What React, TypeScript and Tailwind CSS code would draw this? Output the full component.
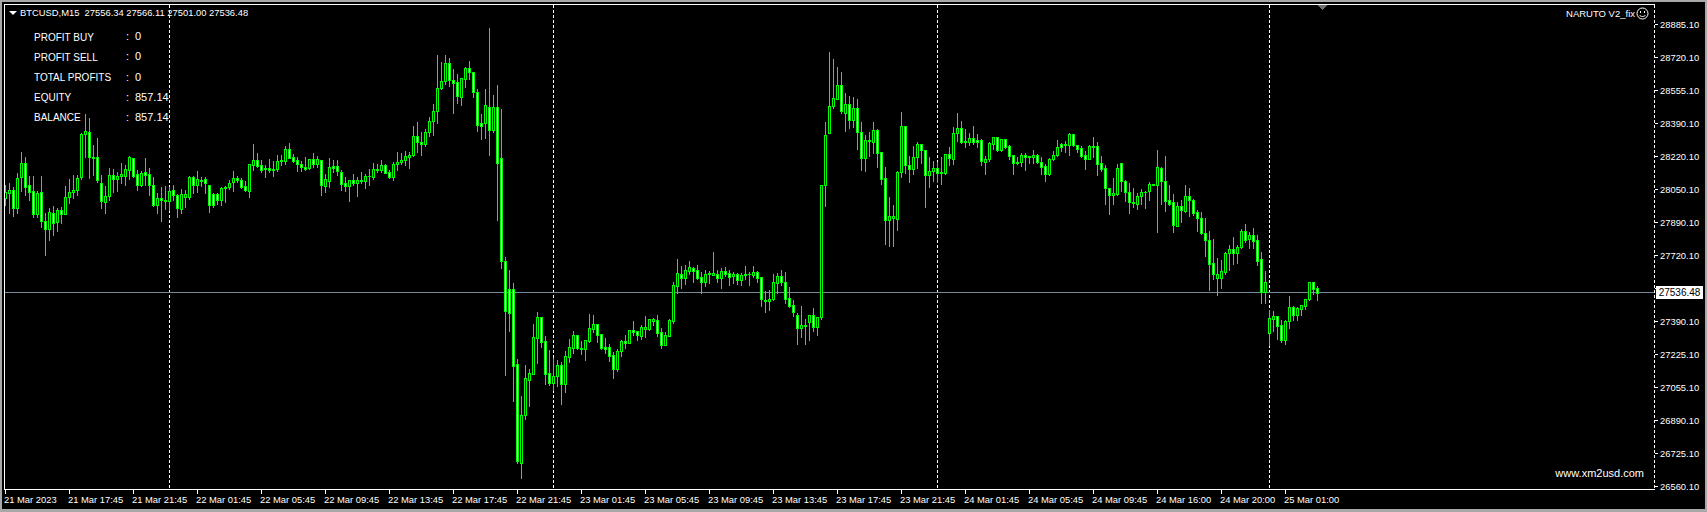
import React from 'react';

type Row = number[];

// candle readings: [high, bodyTop, bodyBottom, low, filled], traced from 3x crops so y = off + v / 3
const groups: { off: number; rows: Row[] }[] = [
  { off: 100, rows: [
    [255,277,293,315,0],[250,271,278,340,0],[262,271,325,347,1],[218,235,325,340,0],[157,190,232,272,0],[170,190,262,285,1],
    [227,256,277,300,1],[227,274,343,350,1],[272,279,341,352,0],[229,277,363,380,1],[340,364,388,464,1],[325,337,388,420,0],
    [318,340,370,405,1],[325,331,367,392,0],[320,331,341,370,1],[258,292,341,341,0],[238,277,292,310,0],[226,271,277,295,0],
    [225,235,271,285,0],[100,103,232,238,0],[42,94,103,170,0],[55,97,172,235,1],[135,172,173,225,0],[113,172,241,245,1],
    [225,250,304,323,1],[258,289,307,340,0],[205,226,289,300,0],[206,226,238,275,1],[215,229,238,272,0],[190,223,229,250,0],
    [195,208,229,255,0],[168,171,211,237,0],[175,175,229,232,1],[210,223,254,270,1],[212,220,256,258,0],[175,217,226,255,1],
    [205,223,256,285,1],[230,256,314,318,1],[280,295,314,340,0],[262,295,301,362,1],[257,301,302,328,0],[262,274,304,330,0],
    [255,271,286,300,1],[283,286,325,350,1],[268,283,326,338,0],[270,283,292,320,0],[228,232,292,296,0],[228,232,254,280,1],
    [213,238,254,275,0],[230,241,242,258,0],[232,238,250,280,1],[255,256,316,335,1],[278,283,316,320,1],[280,283,301,312,1],
    [262,265,301,315,0],[258,262,265,305,1],[240,250,262,268,0],[213,235,247,272,0],[228,235,241,245,1],
  ] },
  { off: 40, rows: [
    [415,421,440,445,1],[423,439,451,453,1],[372,373,452,470,0],[312,361,376,390,0],[340,361,377,380,1],[360,376,389,395,1],
    [375,385,388,410,1],[358,385,389,395,1],[362,388,389,408,0],[346,364,386,392,0],[345,361,364,375,0],[319,328,362,372,0],
    [309,328,353,353,1],[343,352,362,366,1],[352,361,371,392,1],[362,371,382,392,1],[351,382,386,389,1],[358,358,383,386,0],
    [339,358,371,380,1],[349,358,371,380,0],[360,361,434,465,1],[403,418,437,456,0],[354,382,422,440,0],[360,379,385,395,1],
    [360,379,394,405,1],[390,397,431,450,1],[411,430,437,453,1],[420,421,437,483,0],[402,421,428,434,1],[411,421,428,468,0],
    [396,421,422,428,0],[402,408,422,444,0],[387,408,409,435,0],[369,388,410,416,0],[373,388,389,396,0],[360,376,389,395,0],
    [371,376,398,400,1],[390,397,410,415,1],[366,373,410,420,0],[336,367,373,390,0],[339,361,367,372,0],[333,349,361,375,0],
    [335,346,350,384,0],[258,289,346,348,0],[246,289,307,335,1],[276,307,311,345,1],[266,277,311,318,0],[232,244,277,288,0],
    [193,214,244,285,0],[45,145,214,248,0],[66,124,145,147,0],[45,70,124,132,0],[54,70,121,138,1],[87,121,128,218,1],
    [102,127,167,190,1],[114,115,170,194,0],[82,85,118,140,0],[63,85,97,118,1],[97,97,157,170,1],
  ] },
  { off: 20, rows: [
    [207,217,314,332,1],[282,310,317,356,1],[207,256,310,354,0],[24,260,329,405,1],[225,262,329,335,0],[195,262,428,600,1],[267,415,723,745,1],
  ] },
  { off: 280, rows: [
    [-70,-57,92,285,1],[-30,27,98,152,1],[10,28,257,362,1],[237,253,542,548,1],[348,406,548,593,0],[255,295,404,417,0],
    [267,280,299,378,0],[133,172,281,281,0],[96,112,173,249,0],[112,112,185,200,1],[168,184,281,312,1],[210,278,308,315,1],
    [235,287,308,330,0],[240,256,287,318,0],[247,256,311,372,1],[213,229,311,336,0],[178,202,232,246,0],[153,166,204,218,0],
    [166,166,205,208,1],[183,205,208,222,1],[180,181,208,240,0],[102,145,183,185,0],[105,133,146,156,0],[133,133,166,187,1],
    [163,163,205,206,1],[175,202,206,218,1],[193,202,227,243,1],[217,226,266,294,1],[208,214,266,273,0],[180,184,214,228,0],
    [165,184,190,204,1],[150,151,190,190,0],[123,151,155,165,1],[153,154,166,180,1],
  ] },
  { off: 240, rows: [
    [255,262,288,297,0],[228,262,266,290,0],[238,238,267,270,0],[235,238,242,255,0],[225,240,278,288,1],[265,277,315,323,1],
    [277,286,315,315,0],[238,241,287,288,0],[127,136,243,250,0],[57,100,137,158,0],[78,103,113,143,1],[75,91,114,132,0],
    [64,82,92,103,0],[80,84,92,125,1],[75,91,114,117,1],[97,112,125,158,1],[90,103,125,137,0],[93,100,103,130,0],
    [37,100,104,105,0],[91,103,113,125,1],[85,94,113,143,0],[82,94,101,107,1],[90,100,110,135,1],[97,103,109,128,0],
    [98,103,119,132,1],[100,106,119,135,0],[79,103,106,118,0],[95,103,103,134,0],[79,97,105,110,0],[93,97,113,125,1],
    [112,112,176,198,1],[153,181,182,216,0],[150,178,182,210,0],[102,127,178,180,0],[100,109,128,158,0],[91,109,125,135,1],
    [97,127,176,190,1],[141,175,197,200,1],[180,196,215,228,1],[220,226,263,312,1],[198,256,263,290,0],[237,256,257,312,0],
    [225,226,245,300,0],[205,226,262,273,1],[232,232,262,285,0],
  ] },
  { off: 40, rows: [
    [436,436,831,837,0],[247,286,434,497,0],[37,199,278,278,0],[57,175,199,203,0],[81,136,177,177,0],[97,136,212,219,1],
    [160,193,218,273,0],[168,193,239,264,1],[171,205,239,262,0],[178,205,277,327,1],[247,277,353,390,1],[286,301,353,393,0],
    [277,301,304,348,0],[247,271,305,338,0],[268,271,338,381,1],[337,337,416,432,1],[381,415,539,612,1],[472,529,539,618,0],
    [496,529,535,618,0],[394,397,536,570,0],[217,259,397,411,0],[259,259,376,400,1],[348,376,388,426,1],[319,352,388,402,0],
    [307,313,352,385,0],[313,313,331,370,1],[331,331,406,500,1],[351,394,406,441,0],[363,385,394,423,0],[365,385,400,426,1],
    [351,397,400,432,0],[343,343,398,402,0],[322,343,355,375,1],[262,280,356,372,0],[220,265,280,303,0],[243,265,307,308,1],
    [267,304,307,320,1],[280,295,307,315,0],[259,295,307,312,1],[282,301,307,322,1],[298,301,364,375,1],[349,358,365,402,0],
    [307,310,358,363,0],[292,292,311,327,0],[292,292,331,332,1],[298,298,331,332,0],[298,298,320,325,1],[316,319,349,356,1],
    [346,346,370,402,1],[351,367,370,372,0],[340,346,367,378,0],[340,346,352,390,1],[349,349,352,369,0],[331,346,350,369,0],
    [343,346,367,370,1],[352,367,380,403,1],[373,379,403,423,1],[355,358,403,405,0],[334,346,358,361,0],[300,322,346,348,0],
  ] },
  { off: 110, rows: [
    [100,103,112,122,1],[93,103,104,125,0],[70,73,106,135,0],[72,73,106,107,1],[106,106,116,125,1],[108,115,137,140,1],
    [123,136,146,177,1],[106,109,146,147,0],[82,109,110,140,0],[97,109,161,195,1],[139,160,176,183,1],[165,175,235,282,1],
    [234,235,254,312,1],[205,250,254,282,0],[163,175,253,254,0],[160,160,214,243,1],[211,214,247,273,1],[220,247,277,309,1],
    [235,277,280,290,0],[250,259,282,297,0],[238,247,259,283,0],[244,245,247,294,0],[217,223,244,270,0],[223,223,224,224,0],
    [121,172,224,365,0],[172,175,214,282,1],[139,214,272,303,1],[226,271,281,285,1],[253,277,346,366,1],[275,289,347,348,0],
    [271,289,301,336,1],[226,259,304,305,0],[234,259,271,319,1],[268,270,308,315,1],[300,307,325,362,1],[306,325,370,372,1],
    [324,370,391,438,1],[363,391,461,540,1],[388,460,491,506,1],[445,492,503,555,0],[450,484,503,535,0],[425,430,485,493,0],
    [404,418,428,480,0],[381,418,428,462,1],[405,412,428,458,0],[358,364,412,414,0],[343,364,389,395,1],[365,376,388,414,0],
    [354,376,392,414,1],[376,391,452,465,1],
  ] },
  { off: 250, rows: [
    [5,28,125,158,1],[63,97,125,160,0],[180,205,248,285,0],[183,199,208,243,0],[199,199,227,268,1],[210,226,270,275,1],
    [210,214,269,282,0],[139,172,214,234,0],[168,172,195,210,1],[172,175,195,210,0],[166,166,176,196,0],[148,148,167,178,0],
    [97,97,148,150,0],[97,97,116,132,1],[108,115,128,150,1],
  ] },
];

const candles = groups.flatMap((g) =>
  g.rows.map(([h, t, b, l, filled]) => ({
    h: Math.round(g.off + h / 3),
    t: Math.round(g.off + t / 3),
    b: Math.round(g.off + b / 3),
    l: Math.round(g.off + l / 3),
    filled: filled === 1,
  }))
);

const times = [
  '21 Mar 2023', '21 Mar 17:45', '21 Mar 21:45', '22 Mar 01:45', '22 Mar 05:45', '22 Mar 09:45', '22 Mar 13:45',
  '22 Mar 17:45', '22 Mar 21:45', '23 Mar 01:45', '23 Mar 05:45', '23 Mar 09:45', '23 Mar 13:45', '23 Mar 17:45',
  '23 Mar 21:45', '24 Mar 01:45', '24 Mar 05:45', '24 Mar 09:45', '24 Mar 16:00', '24 Mar 20:00', '25 Mar 01:00',
];

const prices = [
  '28885.10', '28720.10', '28555.10', '28390.10', '28220.10', '28050.10', '27890.10', '27720.10',
  '27555.10', '27390.10', '27225.10', '27055.10', '26890.10', '26725.10', '26560.10',
];

const stats = [
  { label: 'PROFIT BUY', value: '0', h: 'h-[19px]' },
  { label: 'PROFIT SELL', value: '0', h: 'h-[21px]' },
  { label: 'TOTAL PROFITS', value: '0', h: 'h-[20px]' },
  { label: 'EQUITY', value: '857.14', h: 'h-[20px]' },
  { label: 'BALANCE', value: '857.14', h: 'h-[20px]' },
];

const Chart = () => (
  <svg width={1650} height={484} viewBox="5 5 1650 484" shapeRendering="crispEdges" className="block">
    {[169, 553, 937, 1269].map((x) => (
      <line key={x} x1={x + 0.5} x2={x + 0.5} y1={5} y2={489} stroke="#ffffff" strokeDasharray="3 2" />
    ))}
    <line x1={1654.5} x2={1654.5} y1={5} y2={489} stroke="#ffffff" strokeDasharray="3 2" />
    <rect x={5} y={292} width={1649} height={1} fill="#778899" />
    {candles.map((c, i) => {
      const x = 5 + i * 4;
      const bh = Math.max(c.b - c.t + 1, 1);
      return (
        <g key={i}>
          <rect x={x} y={c.h} width={1} height={Math.max(c.l - c.h + 1, 1)} fill="#00ff00" />
          <rect x={x - 1} y={c.t} width={3} height={bh} fill="#00ff00" />
          {bh > 2 && <rect x={x} y={c.t + 1} width={1} height={bh - 2} fill={c.filled ? '#ffffff' : '#000000'} />}
        </g>
      );
    })}
    <polygon points="1318,5 1327,5 1322.5,10" fill="#707070" />
  </svg>
);

export default function App() {
  return (
    <div className="flex h-[512px] w-[1707px] overflow-hidden border-t-2 border-r-2 border-b-[3px] border-l-2 border-[#a8a8a8] bg-black pt-[2px] pl-[2px] font-['Liberation_Sans',sans-serif] text-[10px] leading-none text-white">
      <div className="flex w-[1651px] shrink-0 flex-col">
        <div className="relative h-[486px] border-t border-b border-l border-white">
          <Chart />

          <div className="absolute top-[2px] left-[4px] flex h-[12px] items-center whitespace-pre text-[9.4px]">
            <span className="mr-[3px] h-0 w-0 border-x-[4px] border-t-[4px] border-x-transparent border-t-white" />
            <span>BTCUSD,M15  27556.34 27566.11 27501.00 27536.48</span>
          </div>

          <div className="absolute top-[23px] left-[29px] flex flex-col">
            {stats.map((s) => (
              <div key={s.label} className={`flex items-center ${s.h}`}>
                <span className="w-[92px]">{s.label}</span>
                <span className="w-[9px] pb-[2px] text-[11px]">:</span>
                <span className="pb-[2px] text-[11px]">{s.value}</span>
              </div>
            ))}
          </div>

          <div className="absolute top-[2px] right-[6px] flex items-center gap-[1px] text-[9.5px]">
            <span>NARUTO V2_fix</span>
            <svg width="13" height="13" viewBox="0 0 13 13" fill="none" stroke="#ffffff" strokeWidth="1">
              <circle cx="6.5" cy="6.5" r="5.5" />
              <rect x="4" y="4" width="1" height="2" fill="#ffffff" stroke="none" />
              <rect x="8" y="4" width="1" height="2" fill="#ffffff" stroke="none" />
              <path d="M3.5 8c1 2 5 2 6 0" />
            </svg>
          </div>

          <div className="absolute right-[11px] bottom-[10px] text-[11px]">www.xm2usd.com</div>
        </div>

        <div className="flex text-[9.4px]">
          {times.map((t) => (
            <div key={t} className="flex w-[64px] flex-col">
              <div className="ml-px h-[4px] w-px bg-white" />
              <span className="mt-[1px] whitespace-nowrap">{t}</span>
            </div>
          ))}
        </div>
      </div>

      <div className="relative flex flex-1 flex-col pt-[4px] text-[9.4px]">
        {prices.map((p) => (
          <div key={p} className="flex h-[33px] shrink-0 items-center">
            <div className="mr-[2px] h-px w-[3px] bg-white" />
            <span>{p}</span>
          </div>
        ))}
        <div className="absolute top-[282px] left-[1px] flex h-[13px] w-[47px] items-center justify-center bg-white text-[10px] text-black">
          27536.48
        </div>
      </div>
    </div>
  );
}
